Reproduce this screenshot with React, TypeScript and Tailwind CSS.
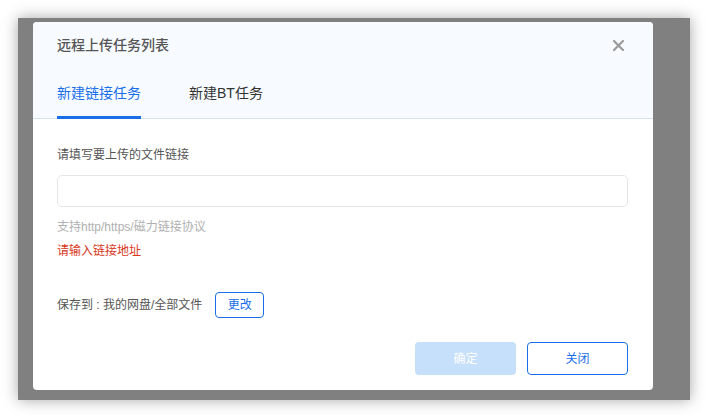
const font = "font-['Liberation_Sans','Noto_Sans_CJK_SC',sans-serif]";

const App = () => {
  return (
    <div className={`w-[709px] h-[419px] bg-white pt-[18px] pl-[18px] ${font}`}>
      <div className="w-[672px] h-[382px] bg-[#808080] pl-[15px] pt-[4px] shadow-[0_0_14px_rgba(0,0,0,0.35)]">
        <div className="w-[620px] h-[368px] bg-white rounded-[4px] overflow-hidden flex flex-col">
          <div className="bg-[#f7fbff] border-b border-[#d5e3ee] px-[24px]">
            <div className="h-[46px] flex items-center justify-between">
              <h2 className="text-[14px] font-medium text-[#555555]">
                远程上传任务列表
              </h2>
              <button className="mr-[5px]">
                <svg width="11" height="11" viewBox="0 0 11 11">
                  <path
                    d="M1 1L10 10M10 1L1 10"
                    stroke="#9a9a9a"
                    strokeWidth="2.2"
                    strokeLinecap="round"
                  />
                </svg>
              </button>
            </div>
            <div className="h-[50px] flex gap-[48px] text-[14px]">
              <div className="flex flex-col justify-end">
                <span className="text-[#1a6fe8] leading-[20px] mb-[13px]">
                  新建链接任务
                </span>
                <div className="h-[3px] bg-[#1a6fe8] mb-[-1px]" />
              </div>
              <div className="flex flex-col justify-end">
                <span className="text-[#333333] leading-[20px] mb-[15px]">
                  新建BT任务
                </span>
              </div>
            </div>
          </div>
          <div className="flex-1 pl-[24px] pr-[25px] pt-[27px] flex flex-col text-[12px] leading-[18px]">
            <label className="text-[#555555]">请填写要上传的文件链接</label>
            <input
              className="mt-[11px] h-[32px] w-full border border-[#e6e6e6] rounded-[5px] outline-none px-[10px]"
              type="text"
            />
            <p className="mt-[11px] text-[#b0b0b0]">支持http/https/磁力链接协议</p>
            <p className="mt-[6px] text-[#d8381c]">请输入链接地址</p>
            <div className="mt-[32px] flex items-center gap-[13px]">
              <span className="text-[#555555]">保存到 : 我的网盘/全部文件</span>
              <button className="w-[49px] h-[26px] border border-[#1a6fe8] rounded-[4px] text-[#1a6fe8]">
                更改
              </button>
            </div>
            <div className="mt-[24px] flex justify-end gap-[11px]">
              <button className="w-[101px] h-[33px] rounded-[4px] bg-[#c6e0fc] text-white">
                确定
              </button>
              <button className="w-[101px] h-[33px] rounded-[4px] border border-[#1a6fe8] text-[#1a6fe8]">
                关闭
              </button>
            </div>
          </div>
        </div>
      </div>
    </div>
  );
};

export default App;
